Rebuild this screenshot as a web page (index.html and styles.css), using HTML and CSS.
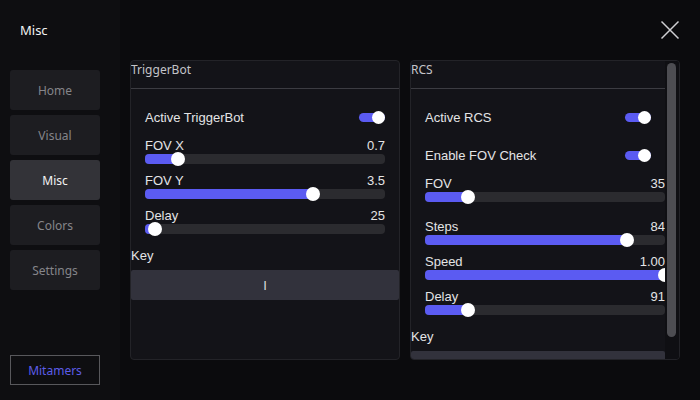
FILE: index.html
```html
<!DOCTYPE html>
<html>
<head>
<meta charset="utf-8">
<link rel="stylesheet" href="styles.css">
</head>
<body>
<div class="app">
  <aside class="sidebar">
    <div class="app-title">Misc</div>
    <nav class="nav">
      <div class="nav-btn">Home</div>
      <div class="nav-btn">Visual</div>
      <div class="nav-btn active">Misc</div>
      <div class="nav-btn">Colors</div>
      <div class="nav-btn">Settings</div>
    </nav>
    <div class="brand">Mitamers</div>
  </aside>
  <main class="main">
    <div class="topbar">
      <svg class="close" width="20" height="20" viewBox="0 0 20 20">
        <path d="M1.5 1.5 L18.5 18.5 M18.5 1.5 L1.5 18.5" stroke="#cfcfd2" stroke-width="1.5" fill="none"/>
      </svg>
    </div>
    <div class="panels">
      <section class="panel">
        <div class="scroll">
          <div class="panel-head">TriggerBot</div>
          <div class="panel-body">
            <div class="toggle-row first"><span>Active TriggerBot</span><span class="toggle"><span class="knob"></span></span></div>
            <div class="slider gap-s"><div class="slider-label"><span>FOV X</span><span>0.7</span></div><div class="track"><div class="fill" style="width:33px"></div><div class="thumb" style="left:33px"></div></div></div>
            <div class="slider gap-m"><div class="slider-label"><span>FOV Y</span><span>3.5</span></div><div class="track"><div class="fill" style="width:168px"></div><div class="thumb" style="left:168px"></div></div></div>
            <div class="slider gap-m"><div class="slider-label"><span>Delay</span><span>25</span></div><div class="track"><div class="fill" style="width:10px"></div><div class="thumb" style="left:10px"></div></div></div>
            <div class="key-label">Key</div>
            <div class="key-btn">I</div>
          </div>
        </div>
      </section>
      <section class="panel">
        <div class="scroll">
          <div class="panel-head">RCS</div>
          <div class="panel-body">
            <div class="toggle-row first"><span>Active RCS</span><span class="toggle"><span class="knob"></span></span></div>
            <div class="toggle-row gap-l"><span>Enable FOV Check</span><span class="toggle"><span class="knob"></span></span></div>
            <div class="slider gap-s"><div class="slider-label"><span>FOV</span><span>35</span></div><div class="track"><div class="fill" style="width:43px"></div><div class="thumb" style="left:43px"></div></div></div>
            <div class="slider gap-x"><div class="slider-label"><span>Steps</span><span>84</span></div><div class="track"><div class="fill" style="width:202px"></div><div class="thumb" style="left:202px"></div></div></div>
            <div class="slider gap-m"><div class="slider-label"><span>Speed</span><span>1.00</span></div><div class="track"><div class="fill" style="width:240px"></div><div class="thumb" style="left:240px"></div></div></div>
            <div class="slider gap-m"><div class="slider-label"><span>Delay</span><span>91</span></div><div class="track"><div class="fill" style="width:43px"></div><div class="thumb" style="left:43px"></div></div></div>
            <div class="key-label">Key</div>
            <div class="key-btn"></div>
          </div>
        </div>
        <div class="scrollbar"><div class="scroll-thumb"></div></div>
      </section>
    </div>
  </main>
</div>
</body>
</html>
```

FILE: styles.css
```css
* { box-sizing: border-box; }
html, body { margin: 0; padding: 0; }
body {
  width: 700px;
  height: 400px;
  overflow: hidden;
  background: #0b0b0d;
  font-family: "Liberation Sans", Arial, sans-serif;
  color: #e4e4e6;
}
.app {
  display: flex;
  width: 700px;
  height: 400px;
}
.sidebar {
  width: 120px;
  flex: none;
  background: #0e0e11;
  display: flex;
  flex-direction: column;
  padding: 0 20px 15px 10px;
}
.app-title {
  height: 60px;
  line-height: 60px;
  padding-left: 10px;
  font-family: "Noto Sans", sans-serif;
  font-size: 13px;
  color: #f2f2f2;
}
.nav {
  margin-top: 10px;
  display: flex;
  flex-direction: column;
  gap: 5px;
}
.nav-btn {
  width: 90px;
  height: 40px;
  border-radius: 3px;
  background: #1d1d21;
  color: #85858a;
  font-family: "Noto Sans", sans-serif;
  font-size: 12px;
  display: flex;
  align-items: center;
  justify-content: center;
}
.nav-btn.active {
  background: #333338;
  color: #f4f4f4;
}
.brand {
  margin-top: auto;
  width: 90px;
  height: 30px;
  border: 1px solid #58585c;
  color: #5d5de8;
  font-family: "Noto Sans", sans-serif;
  font-size: 12px;
  display: flex;
  align-items: center;
  justify-content: center;
}
.main {
  flex: 1;
  display: flex;
  flex-direction: column;
}
.topbar {
  height: 60px;
  display: flex;
  justify-content: flex-end;
  align-items: flex-start;
  padding: 20px 20px 0 0;
}
.panels {
  display: flex;
  gap: 10px;
  padding-left: 10px;
}
.panel {
  display: flex;
  width: 270px;
  height: 300px;
  border: 1px solid #232328;
  border-radius: 4px;
  background: #131318;
  overflow: hidden;
}
.scroll {
  flex: 1;
  min-width: 0;
  height: 100%;
  overflow: hidden;
}
.scrollbar {
  flex: none;
  width: 14px;
  height: 100%;
  background: #0f0f13;
  padding: 2px 3px 0 2px;
}
.scroll-thumb {
  height: 274px;
  border-radius: 5px;
  background: #4d4d52;
}
.panel-head {
  height: 28px;
  border-bottom: 1px solid #3c3c42;
  font-family: "Noto Sans", sans-serif;
  font-size: 12px;
  line-height: 18px;
  color: #c4c4c8;
}
.panel-body {
  padding-bottom: 4px;
}
.toggle-row {
  height: 20px;
  padding: 0 14px;
  display: flex;
  align-items: center;
  justify-content: space-between;
  font-size: 13px;
}
.toggle-row.first { margin-top: 18px; }
.gap-s { margin-top: 10px; }
.gap-m { margin-top: 8px; }
.gap-l { margin-top: 18px; }
.gap-x { margin-top: 16px; }
.toggle {
  position: relative;
  width: 26px;
  height: 9px;
  border-radius: 5px;
  background: #5b5bf2;
}
.knob {
  position: absolute;
  right: 0;
  top: -2px;
  width: 13px;
  height: 13px;
  border-radius: 50%;
  background: #ffffff;
}
.slider {
  width: 254px;
  padding-left: 14px;
}
.slider-label {
  width: 240px;
  height: 16px;
  display: flex;
  justify-content: space-between;
  align-items: center;
  font-size: 13px;
}
.track {
  position: relative;
  width: 240px;
  height: 10px;
  margin-top: 1px;
  border-radius: 4px;
  background: #2b2b2f;
}
.fill {
  height: 100%;
  border-radius: 4px 0 0 4px;
  background: #5b5bf2;
}
.thumb {
  position: absolute;
  top: -2px;
  width: 14px;
  height: 14px;
  margin-left: -7px;
  border-radius: 50%;
  background: #ffffff;
}
.key-label {
  margin-top: 14px;
  height: 16px;
  line-height: 16px;
  font-size: 13px;
}
.key-btn {
  margin-top: 6px;
  height: 30px;
  border-radius: 2px;
  background: #32323c;
  display: flex;
  align-items: center;
  justify-content: center;
  font-size: 13px;
  color: #dcdcdc;
}
```
